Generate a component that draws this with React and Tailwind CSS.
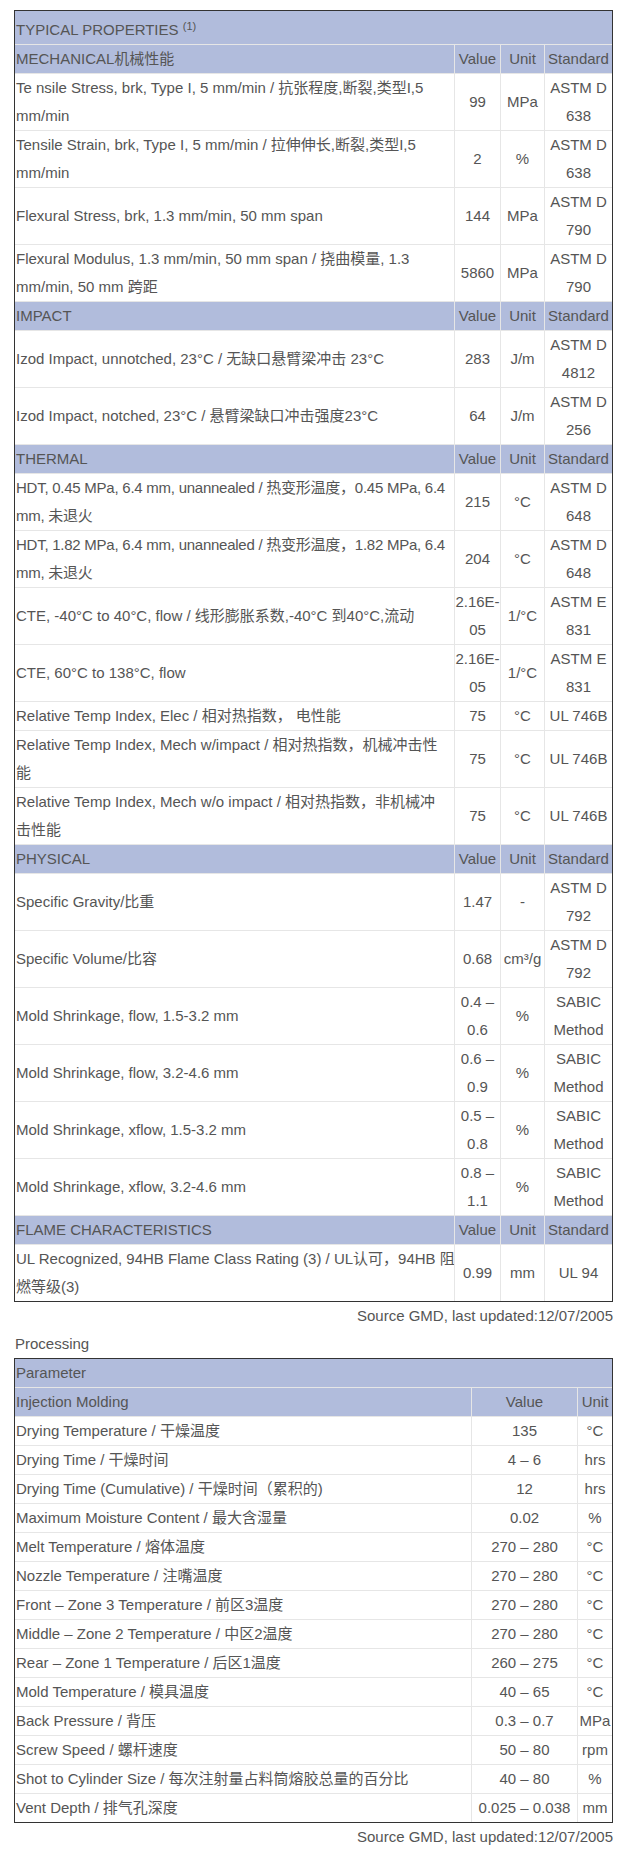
import React from 'react'

// property text is written with the line breaks of the source page
const sections = [
  {
    title: 'MECHANICAL机械性能',
    rows: [
      ['Te nsile Stress, brk, Type I, 5 mm/min / 抗张程度,断裂,类型I,5\nmm/min', '99', 'MPa', 'ASTM D 638'],
      ['Tensile Strain, brk, Type I, 5 mm/min / 拉伸伸长,断裂,类型I,5\nmm/min', '2', '%', 'ASTM D 638'],
      ['Flexural Stress, brk, 1.3 mm/min, 50 mm span', '144', 'MPa', 'ASTM D 790'],
      ['Flexural Modulus, 1.3 mm/min, 50 mm span / 挠曲模量, 1.3\nmm/min, 50 mm 跨距', '5860', 'MPa', 'ASTM D 790'],
    ],
  },
  {
    title: 'IMPACT',
    rows: [
      ['Izod Impact, unnotched, 23°C / 无缺口悬臂梁冲击 23°C', '283', 'J/m', 'ASTM D 4812'],
      ['Izod Impact, notched, 23°C / 悬臂梁缺口冲击强度23°C', '64', 'J/m', 'ASTM D 256'],
    ],
  },
  {
    title: 'THERMAL',
    rows: [
      ['HDT, 0.45 MPa, 6.4 mm, unannealed / 热变形温度，0.45 MPa, 6.4\nmm, 未退火', '215', '°C', 'ASTM D 648', true],
      ['HDT, 1.82 MPa, 6.4 mm, unannealed / 热变形温度，1.82 MPa, 6.4\nmm, 未退火', '204', '°C', 'ASTM D 648', true],
      ['CTE, -40°C to 40°C, flow / 线形膨胀系数,-40°C 到40°C,流动', '2.16E-05', '1/°C', 'ASTM E 831'],
      ['CTE, 60°C to 138°C, flow', '2.16E-05', '1/°C', 'ASTM E 831'],
      ['Relative Temp Index, Elec / 相对热指数， 电性能', '75', '°C', 'UL 746B'],
      ['Relative Temp Index, Mech w/impact / 相对热指数，机械冲击性\n能', '75', '°C', 'UL 746B'],
      ['Relative Temp Index, Mech w/o impact / 相对热指数，非机械冲\n击性能', '75', '°C', 'UL 746B'],
    ],
  },
  {
    title: 'PHYSICAL',
    rows: [
      ['Specific Gravity/比重', '1.47', '-', 'ASTM D 792'],
      ['Specific Volume/比容', '0.68', 'cm³/g', 'ASTM D 792'],
      ['Mold Shrinkage, flow, 1.5-3.2 mm', '0.4 – 0.6', '%', 'SABIC Method'],
      ['Mold Shrinkage, flow, 3.2-4.6 mm', '0.6 – 0.9', '%', 'SABIC Method'],
      ['Mold Shrinkage, xflow, 1.5-3.2 mm', '0.5 – 0.8', '%', 'SABIC Method'],
      ['Mold Shrinkage, xflow, 3.2-4.6 mm', '0.8 – 1.1', '%', 'SABIC Method'],
    ],
  },
  {
    title: 'FLAME CHARACTERISTICS',
    rows: [
      ['UL Recognized, 94HB Flame Class Rating (3) / UL认可，94HB 阻\n燃等级(3)', '0.99', 'mm', 'UL 94'],
    ],
  },
]

const processing = [
  ['Drying Temperature / 干燥温度', '135', '°C'],
  ['Drying Time / 干燥时间', '4 – 6', 'hrs'],
  ['Drying Time (Cumulative) / 干燥时间（累积的)', '12', 'hrs'],
  ['Maximum Moisture Content / 最大含湿量', '0.02', '%'],
  ['Melt Temperature / 熔体温度', '270 – 280', '°C'],
  ['Nozzle Temperature / 注嘴温度', '270 – 280', '°C'],
  ['Front – Zone 3 Temperature / 前区3温度', '270 – 280', '°C'],
  ['Middle – Zone 2 Temperature / 中区2温度', '270 – 280', '°C'],
  ['Rear – Zone 1 Temperature / 后区1温度', '260 – 275', '°C'],
  ['Mold Temperature / 模具温度', '40 – 65', '°C'],
  ['Back Pressure / 背压', '0.3 – 0.7', 'MPa'],
  ['Screw Speed / 螺杆速度', '50 – 80', 'rpm'],
  ['Shot to Cylinder Size / 每次注射量占料筒熔胶总量的百分比', '40 – 80', '%'],
  ['Vent Depth / 排气孔深度', '0.025 – 0.038', 'mm'],
]

const propCols = 'grid grid-cols-[439px_46px_44px_68px] border-t border-[#e6e6e6]'
const procCols = 'grid grid-cols-[456px_106px_35px] border-t border-[#e6e6e6]'
const center = 'flex items-center justify-center text-center border-l border-[#e6e6e6]'

function SourceNote() {
  return <p className="text-right">Source GMD, last updated:12/07/2005</p>
}

export default function App() {
  return (
    <div className="min-h-screen bg-white pt-[10px] text-[15px] leading-[28px] text-[#555] font-['Liberation_Sans','Noto_Sans_CJK_SC',sans-serif]">
      <div className="ml-[14px] w-[599px]">
        {/* Typical properties */}
        <div className="border border-[#333]">
          <div className="bg-[#b1bcdc] pl-px pt-[5px]">
            TYPICAL PROPERTIES <sup className="text-[11px]">(1)</sup>
          </div>
          {sections.map((section) => (
            <React.Fragment key={section.title}>
              <div className={`${propCols} bg-[#b1bcdc]`}>
                <div className="pl-px">{section.title}</div>
                <div className={center}>Value</div>
                <div className={center}>Unit</div>
                <div className={center}>Standard</div>
              </div>
              {section.rows.map(([prop, value, unit, standard, tight]) => (
                <div key={prop} className={propCols}>
                  <div className="flex items-center pl-px">
                    <span className={tight ? 'whitespace-pre tracking-[-0.25px]' : 'whitespace-pre'}>{prop}</span>
                  </div>
                  <div className={center}>{value}</div>
                  <div className={center}>{unit}</div>
                  <div className={center}>{standard}</div>
                </div>
              ))}
            </React.Fragment>
          ))}
        </div>
        <SourceNote />

        {/* Processing */}
        <p className="pl-px">Processing</p>
        <div className="border border-[#333]">
          <div className="bg-[#b1bcdc] pl-px">Parameter</div>
          <div className={`${procCols} bg-[#b1bcdc]`}>
            <div className="pl-px">Injection Molding</div>
            <div className={center}>Value</div>
            <div className={center}>Unit</div>
          </div>
          {processing.map(([param, value, unit]) => (
            <div key={param} className={procCols}>
              <div className="pl-px">{param}</div>
              <div className={center}>{value}</div>
              <div className={center}>{unit}</div>
            </div>
          ))}
        </div>
        <SourceNote />
      </div>
    </div>
  )
}
